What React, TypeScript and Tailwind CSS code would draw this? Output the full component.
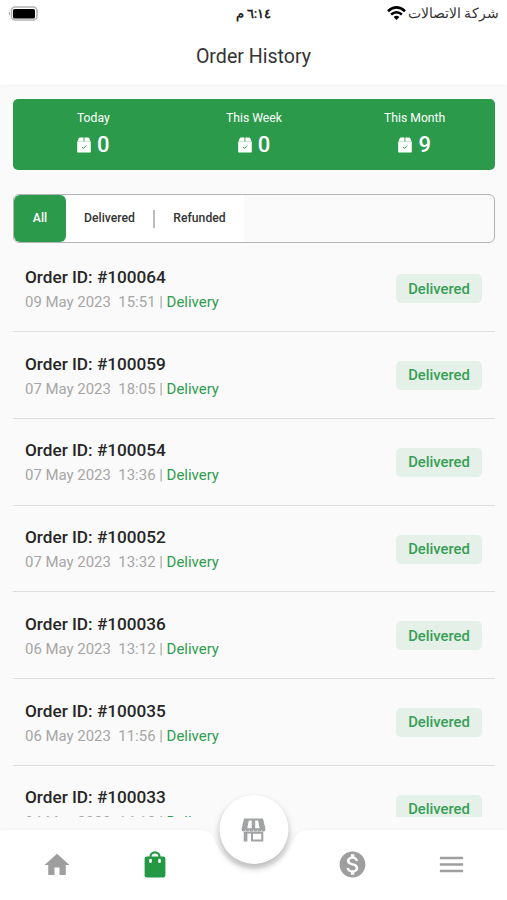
import { MdHome, MdMenu, MdMonetizationOn } from "react-icons/md"

const stats = [
  { label: "Today", value: 0 },
  { label: "This Week", value: 0 },
  { label: "This Month", value: 9 },
]

const orders = [
  { id: "100064", date: "09 May 2023", time: "15:51" },
  { id: "100059", date: "07 May 2023", time: "18:05" },
  { id: "100054", date: "07 May 2023", time: "13:36" },
  { id: "100052", date: "07 May 2023", time: "13:32" },
  { id: "100036", date: "06 May 2023", time: "13:12" },
  { id: "100035", date: "06 May 2023", time: "11:56" },
  { id: "100033", date: "04 May 2023", time: "14:12" },
]

function PackageIcon() {
  return (
    <svg width="14" height="16" viewBox="0 0 14 16" fill="white">
      <path d="M3 0.4h3.5v4H0.6L1.6 1.4Q2 0.4 3 0.4zM7.4 0.4h3.6q1 0 1.4 1l1 3H7.4z" />
      <path d="M0.2 4.4h13.6v10q0 1.2-1.2 1.2h-11.2q-1.2 0-1.2-1.2z" />
      <path d="M5 10l1.5 1.4 2.7-2.8" stroke="#2b9b4b" strokeWidth="1" fill="none" />
    </svg>
  )
}

function BagIcon() {
  return (
    <svg width="22" height="27" viewBox="0 0 22 27">
      <path d="M6.5 7V5.6a4.5 4.2 0 0 1 9 0V7" fill="none" stroke="#249944" strokeWidth="2.2" />
      <rect x="0.6" y="5.6" width="20.8" height="20.8" rx="2.2" fill="#249944" />
      <rect x="5.2" y="7.8" width="2.6" height="4.2" rx="1.2" fill="white" />
      <rect x="14.2" y="7.8" width="2.6" height="4.2" rx="1.2" fill="white" />
    </svg>
  )
}

function StoreIcon() {
  return (
    <svg width="26" height="24" viewBox="0 0 26 24" fill="#a0a3a4">
      <path
        fillRule="evenodd"
        d="M3.5 0.5h19l2.5 10.5q0 2.5-2.1 2.5t-2-1.8q0 1.8-2 1.8t-2-1.8q0 1.8-2 1.8t-1.9-1.8q0 1.8-2 1.8t-2-1.8q0 1.8-2 1.8t-2-1.8q0 1.8-2 1.8T1 11zM8.3 2.5L6.8 10.2h4.4V2.5zM14.7 2.5v7.7h4.4L17.6 2.5z"
      />
      <path
        fillRule="evenodd"
        d="M3.2 13.5h19.6V23.5h-12.3V15.5h-3.6v8h-3.7zM12.5 15.7v5.8h8.2v-5.8z"
      />
    </svg>
  )
}

function StatusBar() {
  return (
    <div className="grid h-[27px] grid-cols-3 items-center px-2">
      {/* Battery */}
      <svg width="31" height="15" viewBox="0 0 31 15">
        <path d="M2 5.5Q-0.5 7.5 2 9.5z" fill="#a6a6a6" />
        <rect x="3.5" y="1" width="25.5" height="13" rx="3.8" fill="white" stroke="#b4b4b4" strokeWidth="1.6" />
        <rect x="5" y="3" width="22" height="9.5" rx="1.5" fill="black" />
      </svg>
      <span dir="rtl" className="justify-self-center text-[13.2px] leading-none font-semibold tracking-[-0.6px] text-[#222]">
        ٦:١٤ م
      </span>
      <div dir="rtl" className="flex items-center gap-[5px] whitespace-nowrap">
        <span className="w-[88px] text-[13.6px] leading-none tracking-[-0.1px] text-[#333]">شركة الاتصالات</span>
        <svg className="relative -top-px" width="19" height="14" viewBox="0 0 19 14" fill="none" stroke="black" strokeWidth="2.6">
          <path d="M1 5.2Q9.5-2.4 18 5.2" />
          <path d="M4.1 8.6Q9.5 3.9 14.9 8.6" />
          <path d="M9.5 14L6.6 11Q9.5 8.7 12.4 11z" fill="black" stroke="none" />
        </svg>
      </div>
    </div>
  )
}

function BottomNav() {
  return (
    <nav className="relative z-10 h-[71px] shrink-0">
      {/* Bar with a notch for the center button */}
      <svg
        className="absolute inset-0 drop-shadow-[0_0_2px_rgba(0,0,0,0.03)]"
        width="507"
        height="71"
        viewBox="0 0 507 71"
        fill="white"
      >
        <path d="M0 1H198C211 1 212 6 216 14C224 31 238 40 254 40C270 40 284 31 292 14C296 6 298 1 310 1H507V71H0z" />
      </svg>
      <div className="relative grid h-full grid-cols-[113px_84px_1fr_87px_111px] items-center justify-items-center text-[#9e9e9e]">
        <MdHome size={30} />
        <BagIcon />
        <span />
        <MdMonetizationOn size={31} />
        <MdMenu size={31} />
      </div>
      <button className="absolute -top-[34px] left-1/2 flex size-[69px] -translate-x-1/2 items-center justify-center rounded-full bg-white shadow-[0_4px_7px_rgba(0,0,0,0.28)]">
        <StoreIcon />
      </button>
    </nav>
  )
}

export default function App() {
  return (
    <div className="flex h-[900px] w-[507px] flex-col overflow-hidden bg-[#fafafa] font-['Roboto','Noto_Sans',sans-serif]">
      <header className="h-[85px] shrink-0 bg-white shadow-[0_1px_3px_rgba(0,0,0,0.03)]">
        <StatusBar />
        <h1 className="mt-[15px] text-center text-[19.6px] leading-[30px] text-[#333]">Order History</h1>
      </header>

      <main className="flex min-h-0 flex-1 flex-col pt-[14px] pr-3 pb-3 pl-[13px]">
        {/* Order counts */}
        <section className="grid h-[71px] shrink-0 grid-cols-3 rounded-[5px] bg-[#2b9b4b] pt-2.5 text-center text-white">
          {stats.map((stat) => (
            <div key={stat.label}>
              <div className="text-[12.2px] leading-[18px]">{stat.label}</div>
              <div className="mt-[3px] flex items-center justify-center gap-1.5 text-[22px] leading-[30px] font-medium">
                <PackageIcon />
                {stat.value}
              </div>
            </div>
          ))}
        </section>

        {/* Filters */}
        <div className="mt-6 flex h-[49px] shrink-0 overflow-hidden rounded-[6px] border border-[#b2b5b5] text-[12.2px] font-medium text-[#333]">
          <button className="w-[52px] rounded-[6px] bg-[#2b9b4b] text-white">All</button>
          <button className="w-[87px] bg-white">Delivered</button>
          <div className="flex items-center bg-white">
            <span className="h-[18px] w-[2px] bg-[#bdbdbd]" />
          </div>
          <button className="w-[89px] bg-white">Refunded</button>
        </div>

        {/* Orders */}
        <div className="mt-[2.4px] min-h-0 flex-1 overflow-hidden">
          {orders.map((order) => (
            <div
              key={order.id}
              className="flex h-[86.75px] items-center justify-between border-b border-[#dedede] pt-[3px] pr-[13px] pl-3"
            >
              <div>
                <div className="text-[17.2px] leading-6 font-medium text-[#262626]">Order ID: #{order.id}</div>
                <div className="text-[14.95px] leading-[26px] whitespace-pre text-[#a6a6a6]">
                  {order.date}{"  "}{order.time} | <span className="text-[#2f9d4e]">Delivery</span>
                </div>
              </div>
              <span className="mb-[2px] flex h-[29px] w-[86px] items-center justify-center rounded-[5px] bg-[#e4f0e8] text-[14.8px] font-medium text-[#379f55]">
                Delivered
              </span>
            </div>
          ))}
        </div>
      </main>

      <BottomNav />
    </div>
  )
}
